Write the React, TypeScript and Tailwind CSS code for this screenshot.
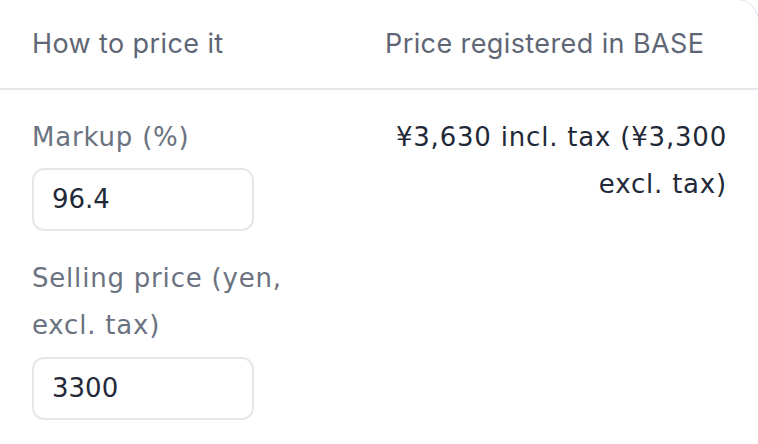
import React from "react";

const labelFont = { fontFamily: '"DejaVu Sans", "Noto Sans CJK JP", sans-serif' };

export default function App() {
  return (
    <div className="w-[758px] h-[444px] overflow-hidden bg-white">
      <div className="-mt-[1px] -ml-[1px] w-[760px] h-[460px] border-t border-r border-[#e3e5e9] rounded-tr-[22px] bg-white">
        <div className="grid grid-cols-[354px_1fr] h-[90px] border-b-2 border-[#e5e7eb] items-center font-['Inter',sans-serif] text-[27px] tracking-[0.4px] text-[#5f6675]">
          <div className="pl-[33px]">How to price it</div>
          <div className="pl-[32px]">Price registered in BASE</div>
        </div>
        <div className="grid grid-cols-[354px_1fr] pt-[24px] text-[26px] leading-[47px]" style={labelFont}>
          <div className="pl-[33px] pr-[32px] flex flex-col">
            <label className="text-[#6b7280] tracking-[0.8px]">Markup (%)</label>
            <div className="mt-[7px] w-[222px] h-[63px] border-2 border-[#e5e7eb] rounded-[12px] flex items-center pl-[18px] text-[#1f2937]">
              96.4
            </div>
            <label className="mt-[24px] text-[#6b7280] tracking-[0.8px]">Selling price (yen, excl. tax)</label>
            <div className="mt-[8px] w-[222px] h-[63px] border-2 border-[#e5e7eb] rounded-[12px] flex items-center pl-[18px] text-[#1f2937]">
              3300
            </div>
          </div>
          <div className="pl-[32px] pr-[31px] text-right text-[#1f2937] tracking-[0.8px]">
            ¥3,630 incl. tax (¥3,300 excl. tax)
          </div>
        </div>
      </div>
    </div>
  );
}
